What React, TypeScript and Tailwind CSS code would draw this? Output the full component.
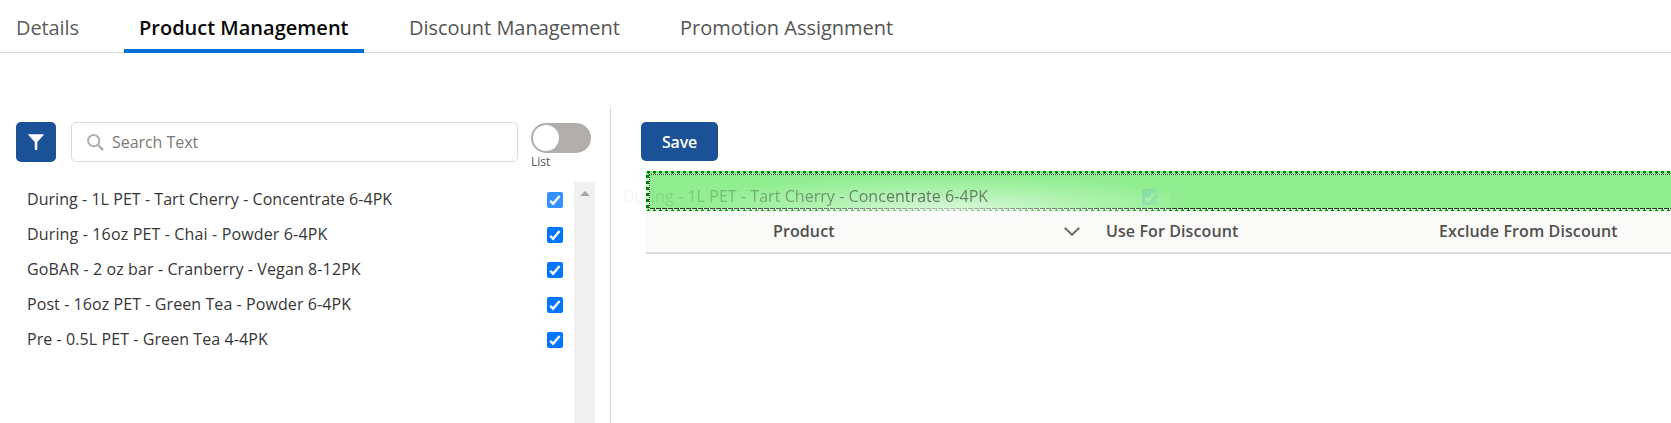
import { ReactNode } from 'react';

const Check = ({ className = '' }: { className?: string }) => (
  <svg viewBox="0 0 16 16" className={`h-4 w-4 shrink-0 ${className}`}>
    <rect width="16" height="16" rx="2" fill="#0075ff" />
    <path d="M3.2 8.8 6.1 11.7 12.6 3.9" fill="none" stroke="#fff" strokeWidth="2.4" />
  </svg>
);

const tabs = [
  { label: 'Details', box: 'ml-px w-[93px] pl-[15px]', text: 'tracking-[-0.1px] text-[#5c5c5a]' },
  { label: 'Product Management', box: 'ml-[30px] w-[240px] border-b-4 border-[#0070d2] pl-[15px]', text: 'font-semibold text-[#080707]' },
  { label: 'Discount Management', box: 'ml-[30px] w-[241px] pl-[15px]', text: 'tracking-[-0.02px] text-[#545452]' },
  { label: 'Promotion Assignment', box: 'ml-[30px] w-[241px] pl-[15px]', text: 'tracking-[-0.02px] text-[#545452]' },
];

const products = [
  { name: 'During - 1L PET - Tart Cherry - Concentrate 6-4PK', tracking: 'tracking-[0.05px]' },
  { name: 'During - 16oz PET - Chai - Powder 6-4PK', tracking: 'tracking-[0.15px]' },
  { name: 'GoBAR - 2 oz bar - Cranberry - Vegan 8-12PK', tracking: 'tracking-[0.11px]' },
  { name: 'Post - 16oz PET - Green Tea - Powder 6-4PK', tracking: 'tracking-[0.08px]' },
  { name: 'Pre - 0.5L PET - Green Tea 4-4PK', tracking: 'tracking-[0.08px]' },
];

const Label = ({ className, children }: { className: string; children: ReactNode }) => (
  <span className={`whitespace-nowrap ${className}`}>{children}</span>
);

const DropZone = () => (
  <div className="flex h-10 flex-col bg-[#90ee90]">
    <div className="h-[2px] bg-[repeating-linear-gradient(90deg,transparent_0_1px,#008000_1px_4px,transparent_4px_6px)]" />
    <div className="h-px bg-[repeating-linear-gradient(90deg,transparent_0_2px,#008000_2px_3px,transparent_3px_6px)]" />
    <div className="ml-[3px] h-px bg-[repeating-linear-gradient(90deg,#333_0_1px,#d8f8d8_1px_2px)]" />
    <div className="flex flex-1">
      <div className="w-[3px] bg-[repeating-linear-gradient(180deg,#008000_0_3px,#c8f7c8_3px_6px)]" />
      <div className="w-px bg-[repeating-linear-gradient(180deg,#333_0_1px,#d8f8d8_1px_2px)]" />
    </div>
    <div className="ml-[3px] h-px bg-[repeating-linear-gradient(90deg,#c8f7c8_0_1px,#333_1px_6px)]" />
    <div className="h-px bg-[repeating-linear-gradient(90deg,#c8f7c8_0_2px,#008000_2px_3px,#c8f7c8_3px_6px)]" />
    <div className="h-px bg-[repeating-linear-gradient(90deg,#c8f7c8_0_1px,#008000_1px_4px,#c8f7c8_4px_6px)]" />
  </div>
);

export default function App() {
  return (
    <div className="h-[423px] w-full overflow-hidden bg-white font-['Open_Sans',sans-serif] text-black">
      <nav className="flex h-[53px] border-b border-[#dddbda]">
        {tabs.map((t) => (
          <div key={t.label} className={`-mb-px flex h-[53px] ${t.box}`}>
            <Label className={`text-[20px] leading-[56px] ${t.text}`}>{t.label}</Label>
          </div>
        ))}
      </nav>
      <main className="mt-[54px] flex h-[316px]">
        <section className="w-[611px] shrink-0 border-r border-[#dddbda] pt-[15px]">
          <div className="flex pl-4">
            <button className="flex h-10 w-10 items-center justify-center rounded-[5px] bg-[#1b5297]">
              <svg viewBox="0 0 16 16" className="h-4 w-4" fill="#fff">
                <path d="M.6.2h14.8c.5 0 .6.4.3.8L9.3 8v7.3c0 .5-.3.7-.7.7H7.6c-.5 0-.8-.3-.8-.7V8L.3 1C0 .6.1.2.6.2Z" />
              </svg>
            </button>
            <div className="ml-[15px] flex h-10 w-[447px] items-center rounded-[5px] border border-[#dddbda] pl-[15px]">
              <svg viewBox="0 0 17 17" className="h-[17px] w-[17px]" fill="none" stroke="#b0adab" strokeWidth="2">
                <circle cx="6.7" cy="6.7" r="5.6" />
                <path d="m10.9 10.9 5.2 5.2" strokeWidth="2.4" />
              </svg>
              <Label className="ml-[8px] -mt-px text-[16px] tracking-[-0.05px] text-[#7a7876]">Search Text</Label>
            </div>
            <div className="ml-[13px] pt-px">
              <div className="h-[30px] w-[60px] rounded-full bg-[#b0adab] p-[2px]">
                <div className="h-[26px] w-[26px] rounded-full bg-white" />
              </div>
              <Label className="block text-[12px] leading-[18px] text-[#555]">List</Label>
            </div>
          </div>
          <div className="mt-[11px] flex h-[250px]">
            <ul className="w-[574px] shrink-0">
              {products.map((p, i) => (
                <li key={p.name} className="flex h-[35px] items-center justify-between pr-[11px] pl-[27px]">
                  <Label className={`-mt-px text-[16px] text-[#363636] ${p.tracking}`}>{p.name}</Label>
                  <Check className={i === 0 ? 'opacity-80' : ''} />
                </li>
              ))}
            </ul>
            <div className="w-[21px] bg-[#f0f0f0] pt-[9px]">
              <svg viewBox="0 0 10 5" className="mx-auto h-[5px] w-[10px]" fill="#a3a3a3"><path d="M0 5 5 0l5 5Z" /></svg>
            </div>
          </div>
        </section>
        <section className="min-w-0 flex-1 pt-[15px] pl-[30px]">
          <button className="block h-[39px] w-[77px] rounded-[5px] bg-[#1b5297] text-[16px] font-semibold tracking-[-0.2px] text-white">Save</button>
          <div className="relative mt-[10px] ml-[5px]">
            <DropZone />
            <div className="flex h-[43px] items-center border-b-2 border-[#dddbda] bg-[#fafaf9] text-[16px] font-semibold tracking-[0.1px] text-[#514f4d]">
              <Label className="-mt-px w-[291px] pl-[127px]">Product</Label>
              <div className="w-[169px] pl-[127px]">
                <svg viewBox="0 0 16 9" className="h-[9px] w-4" fill="none" stroke="#706e6b" strokeWidth="2"><path d="m.8.8 7.2 7 7.2-7" /></svg>
              </div>
              <Label className="-mt-px w-[333px]">Use For Discount</Label>
              <Label className="-mt-px">Exclude From Discount</Label>
            </div>
            <div className="absolute top-[4px] -left-[50px] h-[42px] w-[574px] bg-[radial-gradient(ellipse_270px_34px_at_355px_34px,rgba(255,255,255,0.65),rgba(255,255,255,0.25)_55%,transparent)]" />
            <div className="absolute top-[8px] -left-[50px] flex h-[35px] w-[574px] items-center justify-between pr-[12px] pl-[27px] [mask-image:linear-gradient(90deg,rgba(0,0,0,0.02)_20px,rgba(0,0,0,0.1)_60px,rgba(0,0,0,0.35)_160px,rgba(0,0,0,0.65)_320px,rgba(0,0,0,0.55)_400px,rgba(0,0,0,0.12)_550px,transparent)]">
              <Label className={`-mt-px text-[16px] text-[#2b2b2b] ${products[0].tracking}`}>{products[0].name}</Label>
              <Check />
            </div>
          </div>
        </section>
      </main>
    </div>
  );
}
